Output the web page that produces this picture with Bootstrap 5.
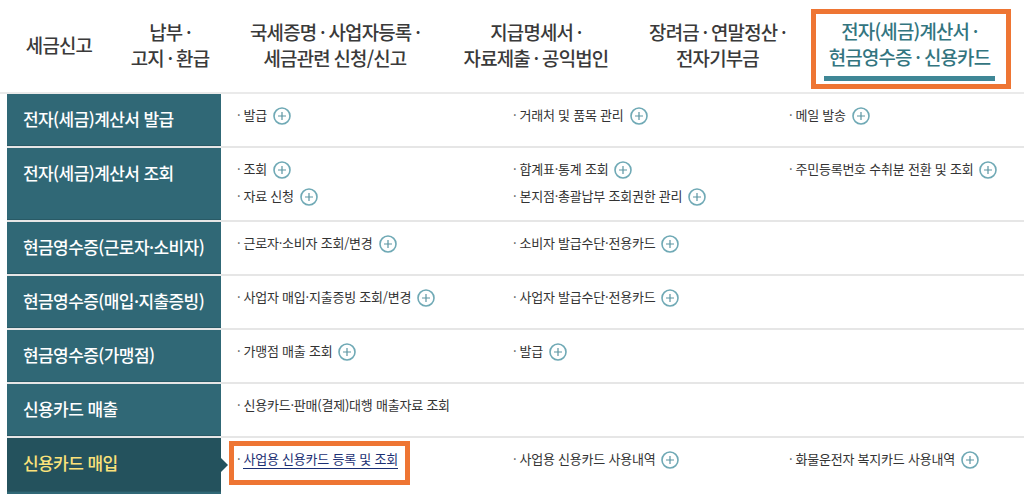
<!DOCTYPE html>
<html lang="ko">
<head>
<meta charset="utf-8">
<title>전자(세금)계산서</title>
<link rel="stylesheet" href="https://cdn.jsdelivr.net/npm/bootstrap@5.3.0/dist/css/bootstrap.min.css">
<style>
html,body{height:494px;overflow:hidden;background:#fff}
body{font-family:"Noto Sans CJK KR","Noto Sans",sans-serif;color:#333}
.topbar{height:94px;border-bottom:2px solid #eaeaea}
.tab-item{height:92px;font-size:18.9px;line-height:26px;font-weight:500;letter-spacing:-.8px;word-spacing:-.8px;color:#3a3a3a;text-align:center;flex:none;padding-bottom:3px}
.w1{width:118px}.w2{width:104px}.w3{width:226px}.w4{width:176px}.w5{width:187px}
.tab-on{width:200px;height:80px;margin-top:9px;margin-bottom:3px;border:5px solid #ee7533;color:#33757f;position:relative;padding-bottom:10px;padding-right:3px}
.tab-on::after{content:"";position:absolute;left:8px;right:11px;bottom:3px;height:5px;background:#3f8796}
.menu-area{margin-left:7px}
.menu-row{border-bottom:2px solid #e6e6e6}
.h54{height:54px}.h74{height:74px}
.side{width:214px;flex:none;background:#306876;border-bottom:1px solid #295a66;color:#fff;font-size:17px;font-weight:500;letter-spacing:-.58px;padding:12px 0 0 16px;line-height:26px}
.side-on{background:#24525d;color:#fbe27a;position:relative}
.side-on::after{content:"";position:absolute;right:-7px;top:20px;border-left:7px solid #24525d;border-top:7px solid transparent;border-bottom:7px solid transparent}
.links{flex:1;padding:7px 0 0 16px;grid-template-columns:276px 276px 1fr;grid-auto-rows:27px;align-content:start}
.cell{font-size:13px;line-height:24px;letter-spacing:-.22px;color:#333;white-space:nowrap;display:flex;align-items:center}
.cell::before{content:"·";margin-right:3px;color:#555}
.plus{width:18px;height:18px;margin-left:6px;flex:none;position:relative;top:1px}
.focus-box{border:5px solid #ee7533;position:absolute;left:229px;top:441px;width:181px;height:44px}
.cell a{color:#1b2f73;text-decoration:none;border-bottom:1.5px solid #1b2f73;line-height:19px;display:block;margin-top:1px}
.tail{width:214px;height:4px;background:#306876}
</style>
</head>
<body>
<svg width="0" height="0" class="d-block position-absolute"><symbol id="pl" viewBox="0 0 18 18"><circle cx="9" cy="9" r="8" fill="#fff" stroke="#6fa9b5" stroke-width="1.6"/><path d="M9 5v8M5 9h8" stroke="#5c95a2" stroke-width="1.2"/></symbol></svg>
<nav class="topbar d-flex">
  <div class="tab-item w1 d-flex align-items-center justify-content-center">세금신고</div>
  <div class="tab-item w2 d-flex align-items-center justify-content-center">납부 ·<br>고지 · 환급</div>
  <div class="tab-item w3 d-flex align-items-center justify-content-center">국세증명 · 사업자등록 ·<br>세금관련 신청/신고</div>
  <div class="tab-item w4 d-flex align-items-center justify-content-center">지급명세서 ·<br>자료제출 · 공익법인</div>
  <div class="tab-item w5 d-flex align-items-center justify-content-center">장려금 · 연말정산 ·<br>전자기부금</div>
  <div class="tab-item tab-on d-flex align-items-center justify-content-center">전자(세금)계산서 ·<br>현금영수증 · 신용카드</div>
</nav>
<main class="menu-area">
  <div class="menu-row h54 d-flex"><div class="side">전자(세금)계산서 발급</div><div class="links d-grid">
    <div class="cell">발급<svg class="plus"><use href="#pl"/></svg></div><div class="cell">거래처 및 품목 관리<svg class="plus"><use href="#pl"/></svg></div><div class="cell">메일 발송<svg class="plus"><use href="#pl"/></svg></div></div></div>
  <div class="menu-row h74 d-flex"><div class="side">전자(세금)계산서 조회</div><div class="links d-grid">
    <div class="cell">조회<svg class="plus"><use href="#pl"/></svg></div><div class="cell">합계표·통계 조회<svg class="plus"><use href="#pl"/></svg></div><div class="cell">주민등록번호 수취분 전환 및 조회<svg class="plus"><use href="#pl"/></svg></div>
    <div class="cell">자료 신청<svg class="plus"><use href="#pl"/></svg></div><div class="cell">본지점·총괄납부 조회권한 관리<svg class="plus"><use href="#pl"/></svg></div></div></div>
  <div class="menu-row h54 d-flex"><div class="side">현금영수증(근로자·소비자)</div><div class="links d-grid">
    <div class="cell">근로자·소비자 조회/변경<svg class="plus"><use href="#pl"/></svg></div><div class="cell">소비자 발급수단·전용카드<svg class="plus"><use href="#pl"/></svg></div></div></div>
  <div class="menu-row h54 d-flex"><div class="side">현금영수증(매입·지출증빙)</div><div class="links d-grid">
    <div class="cell">사업자 매입·지출증빙 조회/변경<svg class="plus"><use href="#pl"/></svg></div><div class="cell">사업자 발급수단·전용카드<svg class="plus"><use href="#pl"/></svg></div></div></div>
  <div class="menu-row h54 d-flex"><div class="side">현금영수증(가맹점)</div><div class="links d-grid">
    <div class="cell">가맹점 매출 조회<svg class="plus"><use href="#pl"/></svg></div><div class="cell">발급<svg class="plus"><use href="#pl"/></svg></div></div></div>
  <div class="menu-row h54 d-flex"><div class="side">신용카드 매출</div><div class="links d-grid">
    <div class="cell">신용카드·판매(결제)대행 매출자료 조회</div></div></div>
  <div class="h54 d-flex"><div class="side side-on">신용카드 매입</div><div class="links d-grid">
    <div class="cell"><a href="#">사업용 신용카드 등록 및 조회</a></div><div class="cell">사업용 신용카드 사용내역<svg class="plus"><use href="#pl"/></svg></div><div class="cell">화물운전자 복지카드 사용내역<svg class="plus"><use href="#pl"/></svg></div></div></div>
  <div class="tail"></div>
</main>
<div class="focus-box"></div>
</body>
</html>
